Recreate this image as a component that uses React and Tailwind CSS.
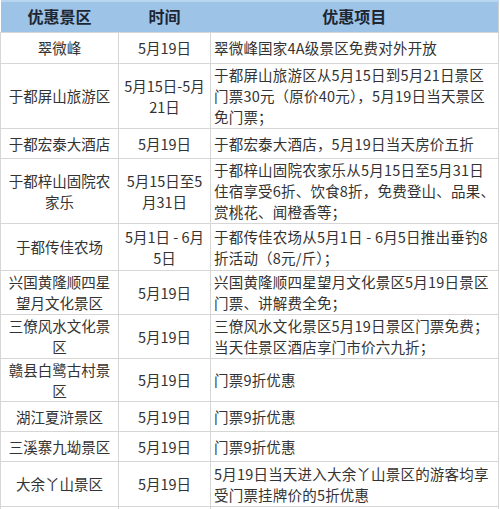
import React from "react";

const rows = [
  { h: 31, name: ["翠微峰"], time: ["5月19日"], desc: ["翠微峰国家4A级景区免费对外开放"] },
  {
    h: 65,
    name: ["于都屏山旅游区"],
    time: ["5月15日-5月", "21日"],
    desc: ["于都屏山旅游区从5月15日到5月21日景区", "门票30元（原价40元），5月19日当天景区", "免门票；"],
  },
  { h: 30, name: ["于都宏泰大酒店"], time: ["5月19日"], desc: ["于都宏泰大酒店，5月19日当天房价五折"] },
  {
    h: 65,
    name: ["于都梓山固院农", "家乐"],
    time: ["5月15日至5", "月31日"],
    desc: ["于都梓山固院农家乐从5月15日至5月31日", "住宿享受6折、饮食8折，免费登山、品果、", "赏桃花、闻橙香等；"],
  },
  {
    h: 47,
    name: ["于都传佳农场"],
    time: ["5月1日 - 6月", "5日"],
    desc: ["于都传佳农场从5月1日 - 6月5日推出垂钓8", "折活动（8元/斤）；"],
  },
  {
    h: 44,
    name: ["兴国黄隆顺四星", "望月文化景区"],
    time: ["5月19日"],
    desc: ["兴国黄隆顺四星望月文化景区5月19日景区", "门票、讲解费全免；"],
  },
  {
    h: 44,
    name: ["三僚风水文化景", "区"],
    time: ["5月19日"],
    desc: ["三僚风水文化景区5月19日景区门票免费；", "当天住景区酒店享门市价六九折；"],
  },
  { h: 43, name: ["赣县白鹭古村景", "区"], time: ["5月19日"], desc: ["门票9折优惠"] },
  { h: 30, name: ["湖江夏浒景区"], time: ["5月19日"], desc: ["门票9折优惠"] },
  { h: 30, name: ["三溪寨九坳景区"], time: ["5月19日"], desc: ["门票9折优惠"] },
  {
    h: 45,
    name: ["大余丫山景区"],
    time: ["5月19日"],
    desc: ["5月19日当天进入大余丫山景区的游客均享", "受门票挂牌价的5折优惠"],
  },
  { h: 30, name: [""], time: [""], desc: [""] },
];

const Lines = ({ lines }) =>
  lines.map((l, i) => (
    <div key={i} className="whitespace-nowrap">
      {l}
    </div>
  ));

export default function App() {
  return (
    <div
      className="w-[500px] h-[509px] overflow-hidden bg-white"
      style={{ fontFamily: '"Noto Sans CJK SC", "Noto Sans", sans-serif' }}
    >
      <table className="table-fixed border-collapse w-[498px] text-[14.5px] leading-[21px] text-[#333333]">
        <colgroup>
          <col className="w-[118px]" />
          <col className="w-[92px]" />
          <col className="w-[288px]" />
        </colgroup>
        <thead>
          <tr className="h-[31px] bg-[#9dc3e6] border-t-2 border-[#b9d6f0]">
            <th className="text-[16px] font-bold text-[#1d2633] text-center">优惠景区</th>
            <th className="text-[16px] font-bold text-[#1d2633] text-center">时间</th>
            <th className="text-[16px] font-bold text-[#1d2633] text-center border-r border-[#d0d0d0]">
              优惠项目
            </th>
          </tr>
        </thead>
        <tbody>
          {rows.map((r, i) => (
            <tr key={i} style={{ height: r.h }}>
              <td className="border border-[#d6d6d6] text-center align-middle p-0">
                <Lines lines={r.name} />
              </td>
              <td className="border border-[#d6d6d6] text-center align-middle p-0">
                <Lines lines={r.time} />
              </td>
              <td className="border border-[#d6d6d6] text-left align-middle py-0 pl-[3px] pr-0 tracking-[0.2px]">
                <Lines lines={r.desc} />
              </td>
            </tr>
          ))}
        </tbody>
      </table>
    </div>
  );
}
